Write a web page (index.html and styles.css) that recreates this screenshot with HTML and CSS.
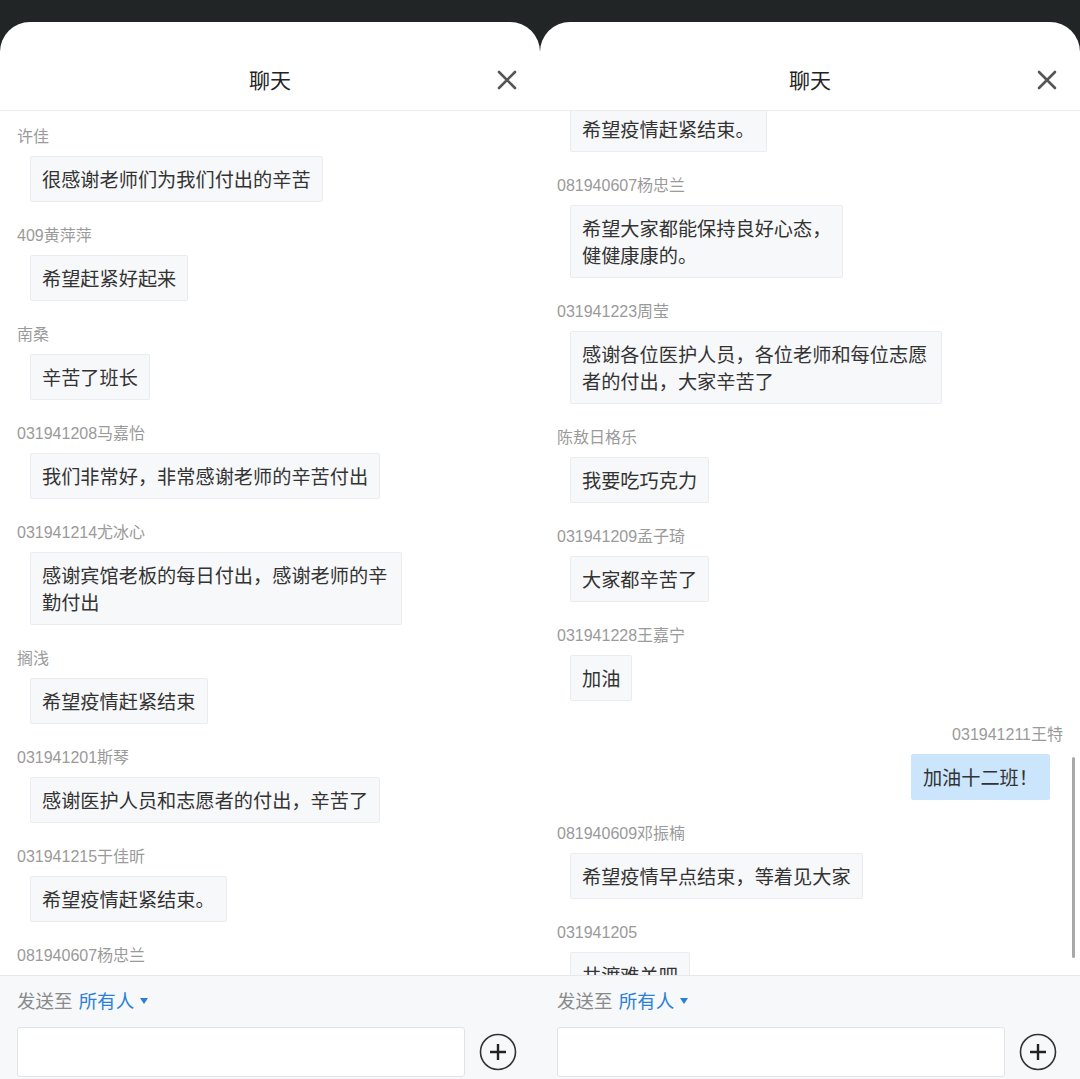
FILE: index.html
```html
<!DOCTYPE html>
<html lang="zh-CN">
<head>
    <meta charset="UTF-8">
    <meta name="viewport" content="width=device-width, initial-scale=1.0">
    <title>聊天</title>
    <link rel="stylesheet" href="styles.css">
</head>
<body>
    <div class="screen">
        <div class="chat-panel">
            <div class="chat-header">
                <span></span>
                <h1>聊天</h1>
                <button class="close-btn">
                    <svg width="20" height="20" viewBox="0 0 20 20"><path d="M2 2L18 18M18 2L2 18" stroke="#555" stroke-width="2.6" stroke-linecap="round"/></svg>
                </button>
            </div>
            <div class="chat-body">
                <div class="msg-list">
                    <div class="msg">
                        <div class="msg-name">许佳</div>
                        <div class="msg-bubble">很感谢老师们为我们付出的辛苦</div>
                    </div>
                    <div class="msg">
                        <div class="msg-name">409黄萍萍</div>
                        <div class="msg-bubble">希望赶紧好起来</div>
                    </div>
                    <div class="msg">
                        <div class="msg-name">南桑</div>
                        <div class="msg-bubble">辛苦了班长</div>
                    </div>
                    <div class="msg">
                        <div class="msg-name">031941208马嘉怡</div>
                        <div class="msg-bubble">我们非常好，非常感谢老师的辛苦付出</div>
                    </div>
                    <div class="msg">
                        <div class="msg-name">031941214尤冰心</div>
                        <div class="msg-bubble">感谢宾馆老板的每日付出，感谢老师的辛勤付出</div>
                    </div>
                    <div class="msg">
                        <div class="msg-name">搁浅</div>
                        <div class="msg-bubble">希望疫情赶紧结束</div>
                    </div>
                    <div class="msg">
                        <div class="msg-name">031941201斯琴</div>
                        <div class="msg-bubble">感谢医护人员和志愿者的付出，辛苦了</div>
                    </div>
                    <div class="msg">
                        <div class="msg-name">031941215于佳昕</div>
                        <div class="msg-bubble">希望疫情赶紧结束。</div>
                    </div>
                    <div class="msg">
                        <div class="msg-name">081940607杨忠兰</div>
                        <div class="msg-bubble">希望大家都能保持良好心态，<br>健健康康的。</div>
                    </div>
                </div>
            </div>
            <div class="chat-footer">
                <div class="send-to">发送至 <span class="send-target">所有人 <i class="caret"></i></span></div>
                <div class="input-row">
                    <input type="text" class="msg-input">
                    <button class="plus-btn">
                        <svg width="38" height="38" viewBox="0 0 38 38"><circle cx="19" cy="19" r="17.5" fill="none" stroke="#333" stroke-width="1.6"/><path d="M19 11V27M11 19H27" stroke="#222" stroke-width="2.4"/></svg>
                    </button>
                </div>
            </div>
        </div>

        <div class="chat-panel">
            <div class="chat-header">
                <span></span>
                <h1>聊天</h1>
                <button class="close-btn">
                    <svg width="20" height="20" viewBox="0 0 20 20"><path d="M2 2L18 18M18 2L2 18" stroke="#555" stroke-width="2.6" stroke-linecap="round"/></svg>
                </button>
            </div>
            <div class="chat-body">
                <div class="msg-list scrolled">
                    <div class="msg">
                        <div class="msg-name">031941215于佳昕</div>
                        <div class="msg-bubble">希望疫情赶紧结束。</div>
                    </div>
                    <div class="msg">
                        <div class="msg-name">081940607杨忠兰</div>
                        <div class="msg-bubble">希望大家都能保持良好心态，<br>健健康康的。</div>
                    </div>
                    <div class="msg">
                        <div class="msg-name">031941223周莹</div>
                        <div class="msg-bubble">感谢各位医护人员，各位老师和每位志愿者的付出，大家辛苦了</div>
                    </div>
                    <div class="msg">
                        <div class="msg-name">陈敖日格乐</div>
                        <div class="msg-bubble">我要吃巧克力</div>
                    </div>
                    <div class="msg">
                        <div class="msg-name">031941209孟子琦</div>
                        <div class="msg-bubble">大家都辛苦了</div>
                    </div>
                    <div class="msg">
                        <div class="msg-name">031941228王嘉宁</div>
                        <div class="msg-bubble">加油</div>
                    </div>
                    <div class="msg mine">
                        <div class="msg-name">031941211王特</div>
                        <div class="msg-bubble">加油十二班！</div>
                    </div>
                    <div class="msg">
                        <div class="msg-name">081940609邓振楠</div>
                        <div class="msg-bubble">希望疫情早点结束，等着见大家</div>
                    </div>
                    <div class="msg">
                        <div class="msg-name">031941205</div>
                        <div class="msg-bubble">共渡难关吧</div>
                    </div>
                </div>
                <div class="scroll-thumb"></div>
            </div>
            <div class="chat-footer">
                <div class="send-to">发送至 <span class="send-target">所有人 <i class="caret"></i></span></div>
                <div class="input-row">
                    <input type="text" class="msg-input">
                    <button class="plus-btn">
                        <svg width="38" height="38" viewBox="0 0 38 38"><circle cx="19" cy="19" r="17.5" fill="none" stroke="#333" stroke-width="1.6"/><path d="M19 11V27M11 19H27" stroke="#222" stroke-width="2.4"/></svg>
                    </button>
                </div>
            </div>
        </div>
    </div>
</body>
</html>
```

FILE: styles.css
```css
body {
    margin: 0;
    background-color: #222526;
    font-family: "Liberation Sans", "Noto Sans CJK SC", sans-serif;
    color: #333;
}
.screen {
    display: flex;
    padding-top: 22px;
    height: 1057px;
    overflow: hidden;
}
.chat-panel {
    width: 540px;
    height: 1057px;
    background-color: white;
    border-radius: 30px 30px 0 0;
    overflow: hidden;
    display: flex;
    flex-direction: column;
}
.chat-header {
    height: 88px;
    flex-shrink: 0;
    border-bottom: 1px solid #ededed;
    display: grid;
    grid-template-columns: 1fr auto 1fr;
    align-items: center;
}
.chat-header h1 {
    margin: 0;
    padding-top: 26px;
    font-size: 21px;
    font-weight: normal;
    color: #222;
    font-family: "Noto Sans CJK SC", sans-serif;
}
.close-btn {
    justify-self: end;
    margin-right: 23px;
    margin-top: 28px;
    padding: 0;
    border: none;
    background: none;
    width: 20px;
    height: 20px;
}
.chat-body {
    flex: 1;
    overflow: hidden;
    position: relative;
}
.msg-list {
    padding-top: 16px;
}
.msg-list.scrolled {
    margin-top: -50px;
}
.msg {
    padding: 0 17px;
    display: flex;
    flex-direction: column;
    align-items: flex-start;
}
.msg-name {
    font-size: 16px;
    line-height: 20px;
    color: #9a9a9a;
}
.msg-bubble {
    margin: 9px 0 24px 13px;
    padding: 8.5px 11px;
    max-width: 372px;
    box-sizing: border-box;
    font-family: "Noto Sans CJK SC", sans-serif;
    font-size: 19.2px;
    line-height: 27px;
    color: #333;
    background-color: #f7f8fa;
    border: 1px solid #eaecef;
    border-radius: 2px;
}
.msg.mine {
    align-items: flex-end;
}
.msg.mine .msg-bubble {
    margin: 9px 13px 24px 0;
    background-color: #cae5fc;
    border-color: #cae5fc;
}
.scroll-thumb {
    position: absolute;
    right: 5px;
    top: 646px;
    width: 3px;
    height: 201px;
    border-radius: 2px;
    background-color: #a8a8a8;
}
.chat-footer {
    flex-shrink: 0;
    border-top: 1px solid #e6e8eb;
    background-color: #f6f8fa;
    padding: 12px 23px 2px 17px;
}
.send-to {
    font-family: "Noto Sans CJK SC", sans-serif;
    font-size: 18.5px;
    line-height: 24px;
    color: #8a8a8a;
}
.send-target {
    color: #2b7fd6;
    margin-left: 2px;
}
.caret {
    display: inline-block;
    width: 0;
    height: 0;
    border-left: 4px solid transparent;
    border-right: 4px solid transparent;
    border-top: 6px solid #2b7fd6;
    vertical-align: middle;
    margin-left: 2px;
    margin-bottom: 3px;
}
.input-row {
    display: flex;
    align-items: center;
    gap: 14px;
    margin-top: 15px;
}
.msg-input {
    flex: 1;
    height: 50px;
    box-sizing: border-box;
    border: 1px solid #e1e3e6;
    border-radius: 3px;
    background-color: white;
}
.plus-btn {
    width: 38px;
    height: 38px;
    padding: 0;
    border: none;
    background: none;
}
```
